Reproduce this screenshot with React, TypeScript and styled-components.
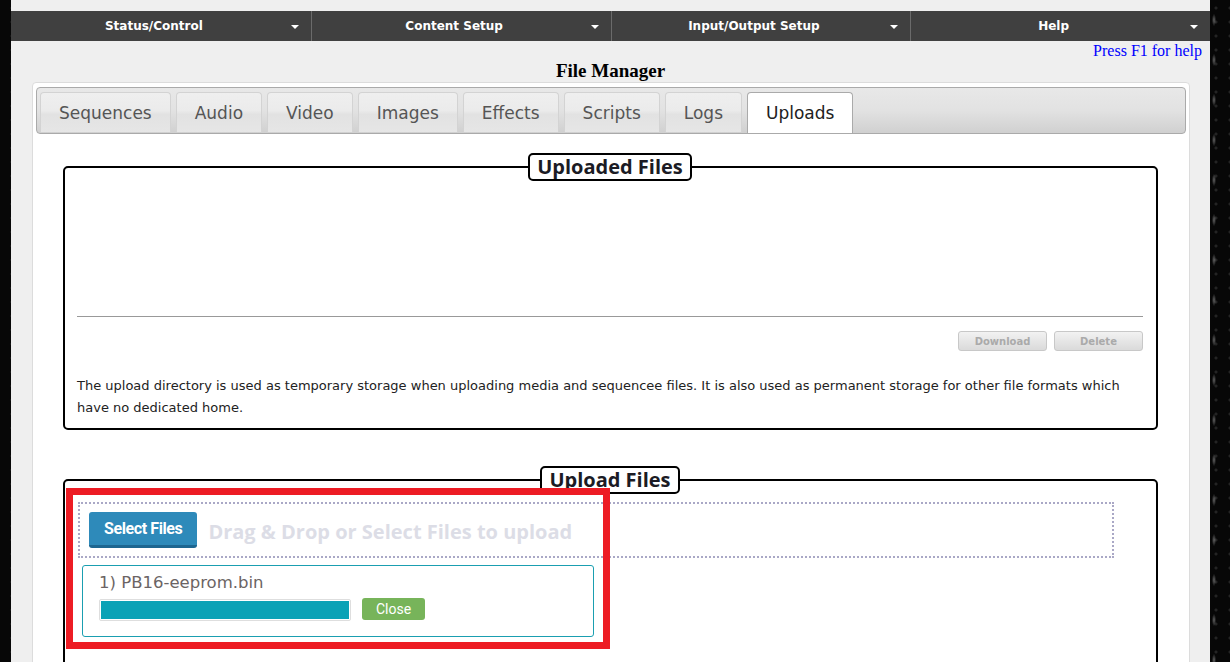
import React from "react";
import styled, { createGlobalStyle } from "styled-components";

const GlobalStyle = createGlobalStyle`
  html, body {
    margin: 0;
    padding: 0;
    height: 662px;
    overflow: hidden;
  }
  body {
    background-color: #070707;
    background-image:
      radial-gradient(ellipse 3px 9px at 4px 20px, rgba(190,190,190,0.5), transparent 70%),
      radial-gradient(circle at 12px 8px, rgba(55,55,55,0.6) 1px, transparent 2px),
      radial-gradient(circle at 5px 30px, rgba(45,45,45,0.6) 1px, transparent 2px);
    background-size: 22px 40px, 14px 14px, 11px 19px;
    background-position: 1210px 0, 0 0, 0 0;
    background-repeat: repeat-y, repeat, repeat;
    font-family: "DejaVu Sans", Verdana, sans-serif;
  }
`;

const Page = styled.div`
  margin-left: 11px;
  width: 1199px;
  min-height: 662px;
  background: #efefef;
  padding-top: 11px;
  box-sizing: border-box;
`;

const Nav = styled.nav`
  display: grid;
  grid-template-columns: repeat(4, 1fr);
  height: 30px;
  background: #404040;
`;

const NavItem = styled.div<{ $first?: boolean }>`
  display: flex;
  align-items: center;
  padding: 0 12px 0 6px;
  border-left: ${(p) => (p.$first ? "none" : "1px solid #6b6b6b")};
  color: #fff;
  font-family: "DejaVu Sans", Verdana, sans-serif;
  font-weight: bold;
  font-size: 12px;
`;

const NavLabel = styled.span`
  flex: 1;
  text-align: center;
`;

const Caret = styled.span`
  width: 0;
  height: 0;
  border-left: 4px solid transparent;
  border-right: 4px solid transparent;
  border-top: 4px solid #fff;
  margin-top: 2px;
`;

const HelpLine = styled.div`
  height: 19px;
  line-height: 19px;
  text-align: right;
  padding-right: 8px;
  font-family: "Liberation Serif", "Times New Roman", serif;
  font-size: 16px;
  color: #0000ff;
`;

const Title = styled.h1`
  margin: 0;
  height: 22px;
  line-height: 22px;
  text-align: center;
  font-family: "Liberation Serif", "Times New Roman", serif;
  font-size: 19px;
  font-weight: bold;
  color: #000;
`;

const Panel = styled.div`
  margin: 0 20px 0 21px;
  background: #fff;
  border: 1px solid #dcdcdc;
  border-radius: 4px;
  padding: 4px 3px 0 3px;
  min-height: 600px;
`;

const TabBar = styled.ul`
  display: flex;
  list-style: none;
  margin: 0;
  padding: 4px 3px 0 3px;
  height: 41px;
  border: 1px solid #aaa;
  border-radius: 4px;
  background: linear-gradient(to bottom, #e8e8e8 0%, #e2e2e2 50%, #d0d0d0 100%);
`;

const Tab = styled.li<{ $active?: boolean; $gap: number }>`
  height: ${(p) => (p.$active ? 41 : 40)}px;
  line-height: 40px;
  margin-right: ${(p) => p.$gap}px;
  padding: 0 18px;
  border: 1px solid ${(p) => (p.$active ? "#aaa" : "#d3d3d3")};
  border-bottom: none;
  border-radius: 4px 4px 0 0;
  box-sizing: border-box;
  font-family: "DejaVu Sans", Verdana, sans-serif;
  font-size: 17px;
  color: ${(p) => (p.$active ? "#212121" : "#555")};
  background: ${(p) =>
    p.$active
      ? "#fff"
      : "linear-gradient(to bottom, #efefef 0%, #ebebeb 45%, #e2e2e2 55%, #e6e6e6 100%)"};
  position: relative;
  z-index: ${(p) => (p.$active ? 1 : 0)};
`;

const TabContent = styled.div`
  padding: 19px 28px 0 27px;
`;

const Fieldset = styled.fieldset<{ $top?: number }>`
  margin: ${(p) => p.$top ?? 0}px 0 0 0;
  border: 2px solid #000;
  border-radius: 5px;
  padding: 0 13px 9px 12px;
  min-width: 0;
`;

const Legend = styled.legend`
  margin: 0 auto;
  padding: 0 7px;
  border: 2px solid #000;
  border-radius: 5px;
  background: #fff;
  font-family: "Open Sans", "Noto Sans", sans-serif;
  font-weight: bold;
  font-size: 20px;
  line-height: 24px;
  color: #1b1b24;
`;

const FileList = styled.div`
  height: 135px;
  border-bottom: 1px solid #999;
`;

const ButtonRow = styled.div`
  display: flex;
  justify-content: flex-end;
  gap: 7px;
  margin-top: 14px;
`;

const DisabledButton = styled.button`
  width: 89px;
  height: 20px;
  padding: 0;
  border: 1px solid #c8c8c8;
  border-radius: 3px;
  background: linear-gradient(to bottom, #f2f2f2, #dadada);
  color: #aaa;
  font-family: "DejaVu Sans", Verdana, sans-serif;
  font-weight: bold;
  font-size: 10px;
`;

const Note = styled.p`
  margin: 24px 0 0 0;
  font-family: "DejaVu Sans", Verdana, sans-serif;
  font-size: 13px;
  line-height: 22px;
  color: #222;
`;

const UploadBody = styled.div`
  position: relative;
  min-height: 200px;
  padding-top: 8px;
`;

const DropZone = styled.div`
  display: flex;
  align-items: center;
  gap: 11px;
  width: 1036px;
  height: 56px;
  margin-left: 1px;
  box-sizing: border-box;
  padding: 0 9px;
  border: 2px dotted #aaa8c6;
`;

const SelectButton = styled.button`
  height: 36px;
  padding: 0 15px;
  border: none;
  border-bottom: 3px solid #1d6690;
  border-radius: 3px;
  background: #2e8aba;
  color: #fff;
  font-family: "Liberation Sans Narrow", Roboto, "Liberation Sans", sans-serif;
  font-weight: bold;
  font-size: 16px;
  letter-spacing: -0.4px;
`;

const DropText = styled.span`
  font-family: "Open Sans", "Noto Sans", sans-serif;
  font-weight: bold;
  font-size: 20px;
  color: #dcdde6;
  margin-top: 3px;
`;

const FileItem = styled.div`
  width: 512px;
  margin: 7px 0 0 5px;
  box-sizing: border-box;
  border: 1px solid #1a9fb1;
  border-radius: 3px;
  padding: 6px 16px 15px 16px;
`;

const FileName = styled.div`
  font-family: "DejaVu Sans", Verdana, sans-serif;
  font-size: 16.5px;
  line-height: 22px;
  color: #6b6464;
`;

const ProgressRow = styled.div`
  display: flex;
  align-items: flex-start;
  gap: 11px;
  margin-top: 4px;
`;

const Progress = styled.div`
  width: 252px;
  height: 22px;
  margin-top: 1px;
  box-sizing: border-box;
  border: 1px solid #dedede;
  border-radius: 2px;
  padding: 1px;
`;

const ProgressFill = styled.div`
  height: 100%;
  background: #0ba2b6;
`;

const CloseButton = styled.button`
  width: 63px;
  height: 22px;
  padding: 0;
  border: none;
  border-radius: 3px;
  background: #77b45a;
  color: #fff;
  font-family: "Liberation Sans Narrow", Roboto, "Liberation Sans", sans-serif;
  font-size: 14px;
`;

const Annotation = styled.div`
  position: absolute;
  left: -11px;
  top: -6px;
  width: 544px;
  height: 161px;
  box-sizing: border-box;
  border: 7px solid #ed1c24;
  pointer-events: none;
`;

const navItems = ["Status/Control", "Content Setup", "Input/Output Setup", "Help"];
const tabs: { name: string; gap: number }[] = [
  { name: "Sequences", gap: 5 },
  { name: "Audio", gap: 5 },
  { name: "Video", gap: 5 },
  { name: "Images", gap: 5 },
  { name: "Effects", gap: 5 },
  { name: "Scripts", gap: 5 },
  { name: "Logs", gap: 5 },
  { name: "Uploads", gap: 0 },
];

export default function App() {
  return (
    <>
      <GlobalStyle />
      <Page>
        <Nav>
          {navItems.map((n, i) => (
            <NavItem key={n} $first={i === 0}>
              <NavLabel>{n}</NavLabel>
              <Caret />
            </NavItem>
          ))}
        </Nav>
        <HelpLine>Press F1 for help</HelpLine>
        <Title>File Manager</Title>
        <Panel>
          <TabBar>
            {tabs.map((t) => (
              <Tab key={t.name} $gap={t.gap} $active={t.name === "Uploads"}>
                {t.name}
              </Tab>
            ))}
          </TabBar>
          <TabContent>
            <Fieldset>
              <Legend>Uploaded Files</Legend>
              <FileList />
              <ButtonRow>
                <DisabledButton disabled>Download</DisabledButton>
                <DisabledButton disabled>Delete</DisabledButton>
              </ButtonRow>
              <Note>
                The upload directory is used as temporary storage when uploading media and
                sequencee files. It is also used as permanent storage for other file formats
                which have no dedicated home.
              </Note>
            </Fieldset>
            <Fieldset $top={36}>
              <Legend>Upload Files</Legend>
              <UploadBody>
                <DropZone>
                  <SelectButton>Select Files</SelectButton>
                  <DropText>Drag &amp; Drop or Select Files to upload</DropText>
                </DropZone>
                <FileItem>
                  <FileName>1) PB16-eeprom.bin</FileName>
                  <ProgressRow>
                    <Progress>
                      <ProgressFill style={{ width: "100%" }} />
                    </Progress>
                    <CloseButton>Close</CloseButton>
                  </ProgressRow>
                </FileItem>
                <Annotation />
              </UploadBody>
            </Fieldset>
          </TabContent>
        </Panel>
      </Page>
    </>
  );
}
